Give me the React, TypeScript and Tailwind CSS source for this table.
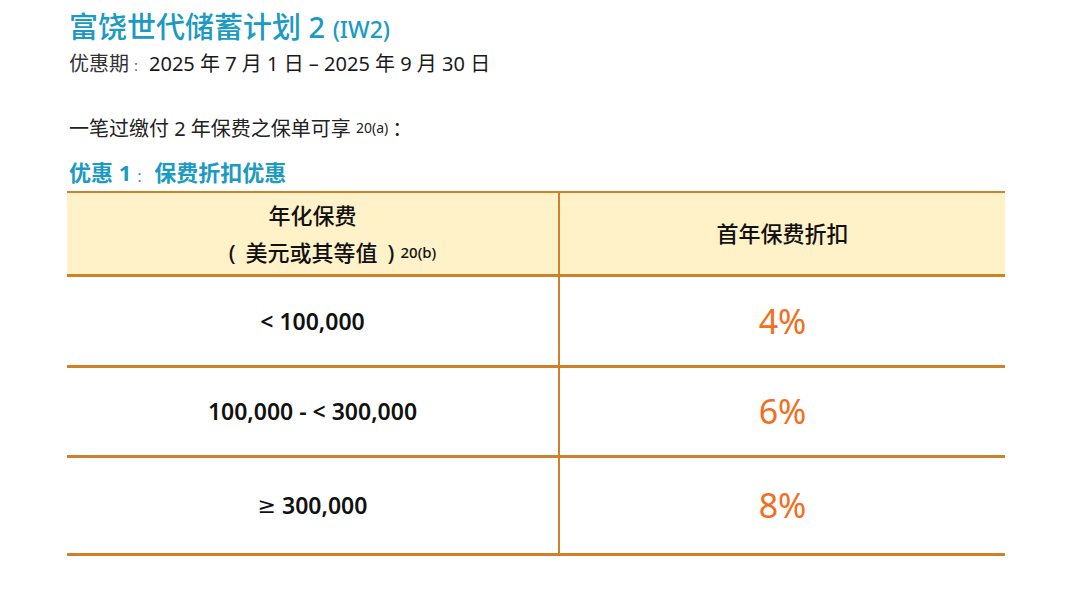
const font = "font-['Noto_Sans','Noto_Sans_CJK_SC',sans-serif]";

const rows = [
  { sign: "<", value: "100,000", pct: "4%", h: "h-[91px]" },
  { sign: "", value: "100,000 - < 300,000", pct: "6%", h: "h-[90px]" },
  { sign: "≥", value: "300,000", pct: "8%", h: "h-[98px]" },
];

export default function App() {
  return (
    <div className={`w-[1080px] h-[591px] bg-white text-[#1a1a1a] ${font}`}>
      <div className="pl-[69px] pt-[9px] w-[1005px]">
        {/* Title */}
        <h1 className="text-[29px] leading-[36px] text-[#1b9ac2] font-medium">
          富饶世代储蓄计划 2 <span className="text-[23px]">(IW2)</span>
        </h1>
        <p className="mt-[3px] text-[20px] leading-[28px]">
          <span className="text-[#333]">优惠期</span>
          <span className="text-[12px] text-[#555] mx-[4px]">：</span>
          2025 年 7 月 1 日 – 2025 年 9 月 30 日
        </p>

        <p className="mt-[35px] text-[20px] leading-[26px] text-[#222]">
          一笔过缴付 2 年保费之保单可享{" "}
          <sup className="text-[14px] relative -top-[3px]">20(a)</sup>
          <span className="ml-[4px]">：</span>
        </p>

        <h2 className="mt-[17px] text-[22px] leading-[26px] font-bold text-[#1b9ac2]">
          优惠 1<span className="text-[13px] mx-[5px] font-normal">：</span>保费折扣优惠
        </h2>

        {/* Table */}
        <div className="-ml-[2px] mt-[2px] border-t-2 border-[#d08027]">
          <div className="flex bg-[#fff1c8] h-[84px] border-b-[3px] border-[#d08027]">
            <div className="w-[493px] border-r-2 border-[#d08027] flex flex-col items-center justify-center text-[22px] font-medium leading-[37px] text-[#111]">
              <span>年化保费</span>
              <span className="pl-[40px]">
                (<span className="mx-[10px]">美元或其等值</span>)
                <sup className="text-[15px] relative -top-[3px] ml-[6px]">20(b)</sup>
              </span>
            </div>
            <div className="flex-1 flex items-center justify-center text-[22px] font-medium text-[#111]">
              首年保费折扣
            </div>
          </div>
          {rows.map((r, i) => (
            <div key={i} className={`flex ${r.h} border-b-[3px] border-[#d08027]`}>
              <div className="w-[493px] border-r-2 border-[#d08027] flex items-center justify-center gap-[6px] text-[23px] font-semibold text-[#111]">
                {r.sign === "≥" && (
                  <span className="font-['DejaVu_Sans',sans-serif] font-normal text-[22px]">≥</span>
                )}
                {r.sign === "<" && <span>&lt;</span>}
                <span>{r.value}</span>
              </div>
              <div className="flex-1 flex items-center justify-center text-[34px] text-[#f26f21]">
                {r.pct}
              </div>
            </div>
          ))}
        </div>
      </div>
    </div>
  );
}
